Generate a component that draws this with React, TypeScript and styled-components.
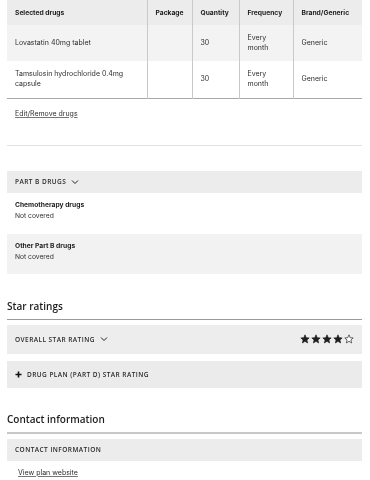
import React from "react";
import styled, { createGlobalStyle } from "styled-components";

const Global = createGlobalStyle`
  html, body { margin: 0; padding: 0; background: #fff; }
  body {
    font-family: "Inter", "Liberation Sans", sans-serif;
    color: #222;
    -webkit-font-smoothing: antialiased;
  }
  * { box-sizing: border-box; }
`;

const Page = styled.div`
  width: 370px;
  padding: 0 8px 0 7px;
  display: flex;
  flex-direction: column;
  will-change: transform;
`;

const Table = styled.table`
  width: 355px;
  border-collapse: collapse;
  table-layout: fixed;
  font-size: 7px;
  border-bottom: 1px solid #a8a8a8;
`;

const Th = styled.th<{ $w: number }>`
  width: ${(p) => p.$w}px;
  background: #ececec;
  text-align: left;
  font-weight: 700;
  font-size: 6.7px;
  height: 25px;
  padding: 0 8px;
  white-space: nowrap;
  color: #1c1c1c;
  border-left: 1px solid #c9c9c9;
  &:first-child { border-left: none; }
`;

const Tr = styled.tr<{ $shade?: boolean }>`
  background: ${(p) => (p.$shade ? "#f3f3f3" : "#fff")};
`;

const Td = styled.td<{ $h: number }>`
  height: ${(p) => p.$h}px;
  padding: 0 8px;
  line-height: 10px;
  vertical-align: middle;
  color: #2e2e2e;
  border-left: 1px solid #c9c9c9;
  &:first-child { border-left: none; padding-right: 12px; }
`;

const TextLink = styled.a<{ $indent?: number }>`
  font-size: 7px;
  color: #2e2e2e;
  text-decoration: underline;
  text-decoration-color: #777;
  margin-left: ${(p) => p.$indent ?? 8}px;
  line-height: 10px;
`;

const LinkRow = styled.div<{ $top: number }>`
  margin-top: ${(p) => p.$top}px;
  height: 10px;
  display: flex;
`;

const Divider = styled.div<{ $top: number; $h?: number; $c: string }>`
  margin-top: ${(p) => p.$top}px;
  height: ${(p) => p.$h ?? 1}px;
  background: ${(p) => p.$c};
`;

const Panel = styled.div<{ $top?: number; $h: number; $bg: string }>`
  margin-top: ${(p) => p.$top ?? 0}px;
  height: ${(p) => p.$h}px;
  background: ${(p) => p.$bg};
  display: flex;
  align-items: center;
  padding: 0 8px;
  gap: 5px;
`;

const PanelLabel = styled.span`
  font-family: "Open Sans", "Liberation Sans", sans-serif;
  font-size: 6.5px;
  font-weight: 600;
  letter-spacing: 0.45px;
  text-transform: uppercase;
  color: #2a2a2a;
`;

const Spacer = styled.div`
  flex: 1;
`;

const InfoBlock = styled.div<{ $bg: string; $h: number }>`
  height: ${(p) => p.$h}px;
  background: ${(p) => p.$bg};
  padding: 7px 8px 0;
  display: flex;
  flex-direction: column;
  font-size: 6.7px;
  line-height: 11px;
  color: #2e2e2e;
`;

const InfoTitle = styled.span`
  font-weight: 700;
  color: #1c1c1c;
`;

const Heading = styled.h2<{ $top: number }>`
  margin: ${(p) => p.$top}px 0 0;
  font-family: "Open Sans", "Liberation Sans", sans-serif;
  font-weight: 600;
  font-size: 10px;
  line-height: 14px;
  color: #1c1c1c;
`;

const Stars = styled.div`
  display: flex;
  gap: 1px;
`;

const Chevron = () => (
  <svg width="8" height="6" viewBox="0 0 8 6">
    <polyline points="1,1.5 4,4.5 7,1.5" fill="none" stroke="#222" strokeWidth="1" />
  </svg>
);

const Plus = () => (
  <svg width="7" height="7" viewBox="0 0 7 7">
    <path d="M3.5 0.5v6M0.5 3.5h6" stroke="#111" strokeWidth="1.6" />
  </svg>
);

const StarIcon = ({ filled }: { filled: boolean }) => (
  <svg width="10" height="10" viewBox="0 0 24 24">
    <path
      d="M12 2l2.9 6.9 7.1.6-5.4 4.7 1.7 7.2L12 17.6 5.7 21.4l1.7-7.2L2 9.5l7.1-.6z"
      fill={filled ? "#1e1e1e" : "#fff"}
      stroke="#1e1e1e"
      strokeWidth={filled ? 1.6 : 1.6}
      strokeLinejoin="round"
    />
  </svg>
);

const drugs = [
  { name: "Lovastatin 40mg tablet", qty: "30", kind: "Generic", h: 36, shade: true },
  { name: "Tamsulosin hydrochloride 0.4mg capsule", qty: "30", kind: "Generic", h: 37, shade: false },
];

export default function App() {
  return (
    <>
      <Global />
      <Page>
        <Table>
          <thead>
            <tr>
              <Th $w={140}>Selected drugs</Th>
              <Th $w={45}>Package</Th>
              <Th $w={47}>Quantity</Th>
              <Th $w={54}>Frequency</Th>
              <Th $w={69}>Brand/Generic</Th>
            </tr>
          </thead>
          <tbody>
            {drugs.map((d) => (
              <Tr key={d.name} $shade={d.shade}>
                <Td $h={d.h}>{d.name}</Td>
                <Td $h={d.h}></Td>
                <Td $h={d.h}>{d.qty}</Td>
                <Td $h={d.h}>
                  Every
                  <br />
                  month
                </Td>
                <Td $h={d.h}>{d.kind}</Td>
              </Tr>
            ))}
          </tbody>
        </Table>

        <LinkRow $top={10}>
          <TextLink href="#">Edit/Remove drugs</TextLink>
        </LinkRow>

        <Divider $top={26} $c="#e2e2e2" />

        <Panel $top={25} $h={22} $bg="#ececec">
          <PanelLabel>Part B drugs</PanelLabel>
          <Chevron />
        </Panel>
        <InfoBlock $bg="#fff" $h={41}>
          <InfoTitle>Chemotherapy drugs</InfoTitle>
          <span>Not covered</span>
        </InfoBlock>
        <InfoBlock $bg="#f2f2f2" $h={40}>
          <InfoTitle>Other Part B drugs</InfoTitle>
          <span>Not covered</span>
        </InfoBlock>

        <Heading $top={25}>Star ratings</Heading>
        <Divider $top={6} $c="#9a9a9a" />

        <Panel $top={5} $h={29} $bg="#ededed">
          <PanelLabel>Overall star rating</PanelLabel>
          <Chevron />
          <Spacer />
          <Stars>
            {[true, true, true, true, false].map((f, i) => (
              <StarIcon key={i} filled={f} />
            ))}
          </Stars>
        </Panel>
        <Panel $top={7} $h={27} $bg="#ebebeb">
          <Plus />
          <PanelLabel>Drug plan (Part D) star rating</PanelLabel>
        </Panel>

        <Heading $top={24}>Contact information</Heading>
        <Divider $top={6} $h={2} $c="#c8c8c8" />

        <Panel $top={5} $h={22} $bg="#ececec">
          <PanelLabel>Contact information</PanelLabel>
        </Panel>

        <LinkRow $top={7}>
          <TextLink href="#" $indent={11}>View plan website</TextLink>
        </LinkRow>
      </Page>
    </>
  );
}
